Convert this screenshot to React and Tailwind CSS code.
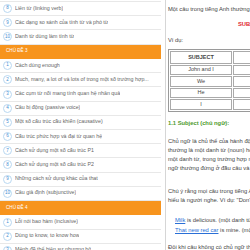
import React from 'react';

const topic2Tail = [
  { n: 8, text: 'Liên từ (linking verb)' },
  { n: 9, text: 'Các dạng so sánh của tính từ và phó từ' },
  { n: 10, text: 'Danh từ dùng làm tính từ' },
];

const topic3 = [
  'Cách dùng enough',
  'Much, many, a lot of và lots of trong một số trường hợp...',
  'Các cụm từ nối mang tính quan hệ nhân quả',
  'Câu bị động (passive voice)',
  'Một số cấu trúc cầu khiến (causative)',
  'Cấu trúc phức hợp và đại từ quan hệ',
  'Cách sử dụng một số cấu trúc P1',
  'Cách sử dụng một số cấu trúc P2',
  'Những cách sử dụng khác của that',
  'Câu giả định (subjunctive)',
];

const topic4 = [
  'Lỗi nói bao hàm (inclusive)',
  'Dùng to know, to know how',
  'Mệnh đề thể hiện sự nhượng bộ',
];

const rows = [
  ['John and I', 'ran into a restaurant.'],
  ['We', 'believe in God.'],
  ['He', 'is a doctor.'],
  ['I', 'will go home.'],
];

function Item({ n, text }) {
  return (
    <div className="flex h-[14.2px] items-center border-b border-[#e8e8e8] pl-[3px]">
      <span className="flex h-[9px] w-[9px] shrink-0 items-center justify-center rounded-full border border-[#b9d8f1] text-[4.5px] leading-none text-[#3f8dd2]">
        {n}
      </span>
      <span className="ml-[3px] overflow-hidden whitespace-nowrap text-[5.3px] text-[#666]">{text}</span>
    </div>
  );
}

function Topic({ label }) {
  return (
    <div className="flex h-[14.5px] items-center bg-[#f7941d] pl-[6px] text-[4.6px] text-white">{label}</div>
  );
}

export default function App() {
  return (
    <div className="flex h-[250px] w-[250px] overflow-hidden bg-white font-['Liberation_Sans',Arial,sans-serif]">
      <div className="w-[161px] shrink-0">
        <div className="mt-[1px] border-t border-[#e8e8e8]">
          {topic2Tail.map((it) => (
            <Item key={it.n} n={it.n} text={it.text} />
          ))}
          <Topic label="CHỦ ĐỀ 3" />
          {topic3.map((t, i) => (
            <Item key={t} n={i + 1} text={t} />
          ))}
          <Topic label="CHỦ ĐỀ 4" />
          {topic4.map((t, i) => (
            <Item key={t} n={i + 1} text={t} />
          ))}
        </div>
      </div>

      <div className="ml-[4px] w-[240px] shrink-0 overflow-hidden border-l border-[#d6d6d6] pl-[2px] pt-[4.5px] text-[5.8px] leading-[9px] text-[#444]">
        <p className="whitespace-nowrap">Một câu trong tiếng Anh thường bao gồm các thành phần sau đây:</p>
        <p className="mt-[6px] whitespace-nowrap pl-[70px] font-bold text-[#e0262b]">SUBJECT + VERB + COMPLEMENT + MODIFIER</p>
        <p className="mt-[7px]">Ví dụ:</p>
        <table className="mt-[4.5px] w-[190px] table-fixed border-separate border-spacing-[1px] border border-[#9a9a9a] text-[5.5px]">
          <thead>
            <tr>
              <th className="h-[12.5px] w-[62px] border border-[#aaa] text-center font-bold">SUBJECT</th>
              <th className="h-[12.5px] border border-[#aaa] text-center font-bold">VERB</th>
            </tr>
          </thead>
          <tbody>
            {rows.map(([s, v]) => (
              <tr key={s}>
                <td className="h-[10.5px] border border-[#aaa] text-center leading-none">{s}</td>
                <td className="h-[10.5px] whitespace-nowrap border border-[#aaa] text-center leading-none">{v}</td>
              </tr>
            ))}
          </tbody>
        </table>
        <p className="mt-[7.5px] whitespace-nowrap font-bold text-[#4e9a2c]">1.1 Subject (chủ ngữ):</p>
        <div className="mt-[9px] whitespace-nowrap">
          <p>Chủ ngữ là chủ thể của hành động trong câu, thực hiện hành động (động từ) trong câu.</p>
          <p>thường là một danh từ (noun) hoặc một ngữ danh từ (noun phrase - một nhóm từ kết thúc bằng</p>
          <p>một danh từ, trong trường hợp này không được bắt đầu bằng một giới từ). Chủ</p>
          <p>ngữ thường đứng ở đầu câu và quyết định việc chia động từ.</p>
        </div>
        <div className="mt-[14px] whitespace-nowrap">
          <p>Chú ý rằng mọi câu trong tiếng Anh đều có chủ ngữ (Trong câu mệnh lệnh, chủ ngữ được ngầm</p>
          <p>hiểu là người nghe. Ví dụ: "Don't move!" = Đứng im!).</p>
        </div>
        <div className="mt-[10px] whitespace-nowrap pl-[7px] leading-[10px]">
          <p>
            <span className="text-[#2a6fd6] underline">Milk</span> is delicious. (một danh từ)
          </p>
          <p>
            <span className="text-[#2a6fd6] underline">That new red car</span> is mine. (một ngữ danh từ)
          </p>
        </div>
        <p className="mt-[8px] whitespace-nowrap">Đôi khi câu không có chủ ngữ thật sự, it hoặc there đóng vai trò chủ ngữ giả.</p>
      </div>
    </div>
  );
}
